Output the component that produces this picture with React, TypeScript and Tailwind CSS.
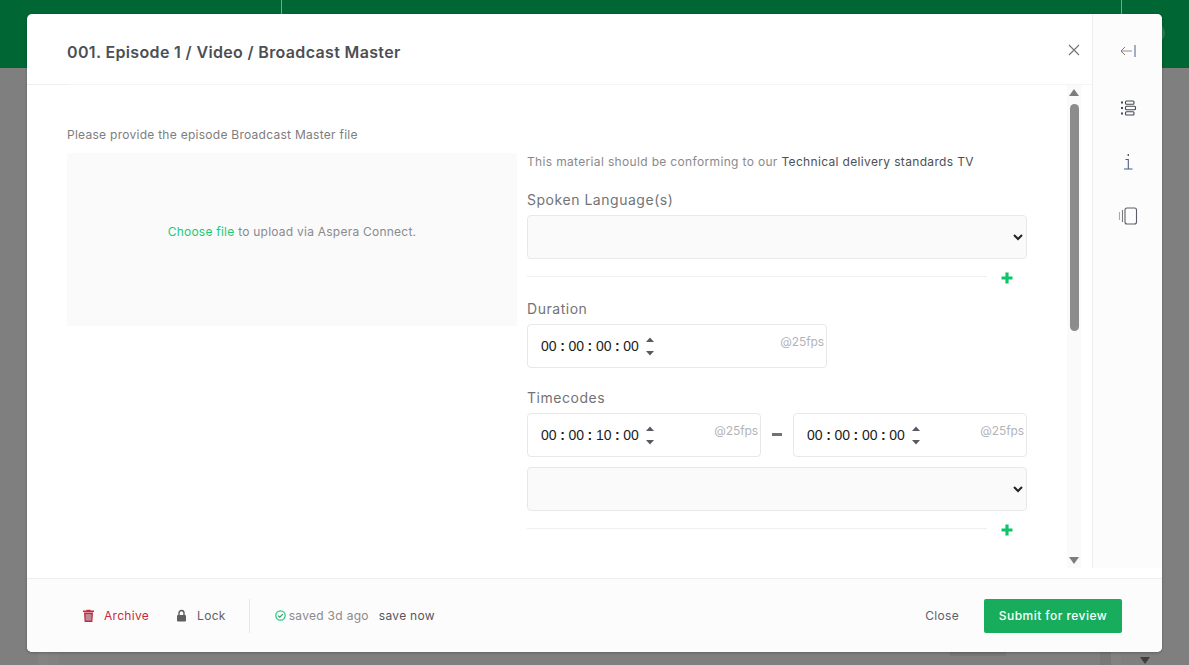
import React from "react";

const FONT = "font-['Inter','Liberation_Sans',sans-serif]";

function Spinner() {
  return (
    <svg width="10" height="20" viewBox="0 0 10 20" className="ml-[6px] shrink-0">
      <path d="M5 1.5 L9 6 L1 6 Z" fill="#565a63" />
      <path d="M1 15 L9 15 L5 19.5 Z" fill="#565a63" />
    </svg>
  );
}

function Time({ value, className }: { value: string; className: string }) {
  return (
    <div className={`relative flex h-[44px] items-center rounded-[4px] border border-[#e8e8e8] bg-white pl-[13px] ${className}`}>
      <span className="mt-[1px] font-['Liberation_Sans',sans-serif] text-[14px] text-[#1c1c1c]">
        {value.split(":").map((p, i) => (
          <React.Fragment key={i}>
            {i > 0 && <span className="mx-[3.6px] font-bold">:</span>}
            {p}
          </React.Fragment>
        ))}
      </span>
      <Spinner />
      <span className="absolute right-[2px] top-[9px] text-[12px] leading-[16px] tracking-[-0.1px] text-[#b4b4b8]">@25fps</span>
    </div>
  );
}

function Sel() {
  return (
    <select className="block h-[44px] w-full rounded-[4px] border border-[#e8e8e8] bg-[#fafafa] px-2 text-[#222]">
      <option value=""></option>
    </select>
  );
}

function Adder() {
  return (
    <div className="flex h-[20px] items-center">
      <div className="h-px w-[460px] bg-[#f0f0f0]" />
      <svg width="12" height="12" viewBox="0 0 12 12" className="ml-[14px] mt-[4px]">
        <path d="M4.4 0.5h3.2v3.9h3.9v3.2H7.6v3.9H4.4V7.6H0.5V4.4h3.9z" fill="#0fc468" />
      </svg>
    </div>
  );
}

export default function App() {
  return (
    <div className={`relative h-[665px] w-full overflow-hidden bg-[#7f7f7f] ${FONT}`}>
      <div className="relative h-[68px] bg-[#006633]">
        <div className="absolute left-[281px] top-0 h-[68px] w-px bg-[#7f9f8f]" />
        <div className="absolute left-[1121px] top-0 h-[68px] w-px bg-[#7f9f8f]" />
        <div className="absolute left-[1145px] top-[23px] h-[20px] w-[20px] rounded-full bg-[#2a7a50]" />
      </div>
      <div className="absolute left-[38px] top-[652px] h-[13px] w-[10px] bg-[#848484]" />
      <div className="absolute left-[48px] top-[652px] h-[13px] w-[11px] bg-[#828282]" />
      <div className="absolute left-[950px] top-[652px] h-[4px] w-[56px] bg-[#777777]" />
      <div className="absolute left-[1100px] top-[652px] h-[13px] w-[11px] bg-[#787878]" />
      <div className="absolute left-[1111px] top-[652px] h-[13px] w-[10px] bg-[#828282]" />
      <svg width="12" height="8" viewBox="0 0 12 8" className="absolute left-[1139px] top-[657px]">
        <path d="M1 0h10L6 7z" fill="#3f3f3f" />
      </svg>

      <div className="absolute left-[27px] top-[14px] flex h-[638px] w-[1135px] flex-col overflow-hidden rounded-[5px] bg-white shadow-[0_1px_3px_rgba(0,0,0,0.25)]">
        <div className="flex h-[554px] shrink-0">
          <div className="flex w-[1065px] shrink-0 flex-col">
            <div className="relative flex h-[71px] shrink-0 items-center justify-between border-b border-[#f5f5f5] pl-[40px] pr-[10px]">
              <h1 className="mt-[6px] text-[16px] font-semibold tracking-[0.35px] text-[#4c4f55]">
                001. Episode 1 / Video / Broadcast Master
              </h1>
              <svg width="14" height="14" viewBox="0 0 14 14" className="mt-[1px] mr-[1px]">
                <path d="M2 2l10 10M12 2L2 12" stroke="#6f7277" strokeWidth="1.1" fill="none" />
              </svg>
              <div className="absolute -bottom-px left-0 h-px w-[39px] bg-[#eeeeee]" />
            </div>
            <div className="flex min-h-0 flex-1">
              <div className="flex min-w-0 flex-1 gap-[10px] pl-[40px] pt-[41px]">
                <div className="w-[450px] shrink-0">
                  <p className="mt-[1px] text-[12px] leading-[16px] tracking-[0.27px] text-[#7d7d80]">Please provide the episode Broadcast Master file</p>
                  <div className="mt-[10px] flex h-[173px] items-start justify-center bg-[#fafafa] pt-[71px] text-[12px] leading-[16px] tracking-[0.24px] text-[#8a8a8d]">
                    <span><span className="text-[#16cc77]">Choose file</span> to upload via Aspera Connect.</span>
                  </div>
                </div>
                <div className="w-[500px] shrink-0 pt-[27px]">
                  <p className="mt-[1px] text-[12px] leading-[16px] tracking-[0.34px] text-[#8a8a8d]">
                    This material should be conforming to our <span className="text-[#4c4f55]">Technical delivery standards TV</span>
                  </p>
                  <label className="mt-[20px] block text-[14px] leading-[20px] tracking-[0.53px] text-[#737377]">Spoken Language(s)</label>
                  <div className="mt-[5px]"><Sel /></div>
                  <div className="mt-[7px]"><Adder /></div>
                  <label className="mt-[13px] block text-[14px] leading-[20px] tracking-[0.53px] text-[#737377]">Duration</label>
                  <div className="mt-[5px]"><Time value="00:00:00:00" className="w-[300px]" /></div>
                  <label className="mt-[20px] block text-[14px] leading-[20px] tracking-[0.53px] text-[#737377]">Timecodes</label>
                  <div className="mt-[5px] flex items-center justify-between">
                    <Time value="00:00:10:00" className="w-[234px]" />
                    <div className="mb-[2px] h-[3px] w-[10px] bg-[#6f7277]" />
                    <Time value="00:00:00:00" className="w-[234px]" />
                  </div>
                  <div className="mt-[10px]"><Sel /></div>
                  <div className="mt-[7px]"><Adder /></div>
                </div>
              </div>
              <div className="mr-[11px] flex w-[14px] shrink-0 flex-col items-center bg-[#fafafa] pt-[4px]">
                <svg width="10" height="7" viewBox="0 0 10 7"><path d="M5 0l5 7H0z" fill="#7d7d7d" /></svg>
                <div className="mt-[8px] h-[227px] w-[9px] rounded-full bg-[#8c8c8c]" />
                <div className="flex-1" />
                <svg width="10" height="7" viewBox="0 0 10 7" className="mb-[4px]"><path d="M0 0h10L5 7z" fill="#7d7d7d" /></svg>
              </div>
            </div>
          </div>
          <div className="flex w-[70px] shrink-0 flex-col items-center border-l border-[#ececec] bg-[#fcfcfc] pt-[30px] text-[#50535a]">
            <svg width="18" height="14" viewBox="0 0 18 14" fill="none" strokeWidth="1">
              <path d="M16 1v12" stroke="#4d5b8c" />
              <path d="M13 7H2" stroke="#b4b6ba" strokeWidth="1.4" />
              <path d="M6 3L2 7l4 4" stroke="#85786c" />
            </svg>
            <svg width="18" height="20" viewBox="0 0 18 20" fill="none" stroke="#44474e" strokeWidth="1.1" className="mt-[40px]">
              <path d="M2 4.5h2M2 10h2M2 15.5h2" strokeWidth="1.8" stroke="#3d4a5e" />
              <rect x="6.5" y="3" width="8.5" height="3.2" rx="1" />
              <rect x="6.5" y="8.3" width="10" height="3.4" rx="1" />
              <rect x="6.5" y="13.8" width="8.5" height="3.2" rx="1" />
            </svg>
            <svg width="10" height="18" viewBox="0 0 10 18" fill="none" stroke="#4a5d80" strokeWidth="1.1" className="mt-[35px]">
              <path d="M5.3 1v2" strokeWidth="1.4" />
              <path d="M2.5 6.5H5.3V15.5M1 16h8.5" />
            </svg>
            <svg width="20" height="18" viewBox="0 0 20 18" fill="none" stroke="#5b5e65" strokeWidth="1.1" className="mt-[36px]">
              <path d="M1.5 5v8" stroke="#b8a978" />
              <path d="M4.5 3v12" stroke="#777a80" />
              <rect x="7" y="1" width="11.5" height="16" rx="2" />
            </svg>
          </div>
        </div>
        <div className="h-[10px] shrink-0 bg-white" />
        <div className="flex h-[74px] shrink-0 items-center justify-between border-t border-[#eeeeee] bg-[#fcfcfc] pl-[56px] pr-[40px] text-[12px] tracking-[0.3px]">
          <div className="flex items-center">
            <svg width="11" height="13" viewBox="0 0 11 13" className="mr-[10px]">
              <path d="M3.5 1.5V.8h4v.7H11v1.4H0V1.5zM1 3.5h9l-.6 9.5H1.6z" fill="#c9283a" />
              <rect x="2.6" y="5" width="5.8" height="6.6" fill="#b98a9a" />
            </svg>
            <span className="text-[#c9283a]">Archive</span>
            <svg width="11" height="13" viewBox="0 0 11 13" fill="none" className="ml-[27px] mr-[10px]">
              <path d="M3 6V4a2.5 2.5 0 015 0v2" stroke="#5a5a5a" strokeWidth="1.4" />
              <rect x="1" y="6" width="9" height="6.5" rx="1" fill="#5f5f5f" />
            </svg>
            <span className="text-[#5f6067]">Lock</span>
            <div className="ml-[23px] mr-[25px] h-[34px] w-px bg-[#e6e6e6]" />
            <svg width="11" height="11" viewBox="0 0 11 11" fill="none" className="mr-[3px]">
              <circle cx="5.5" cy="5.5" r="4.7" stroke="#22cc7f" strokeWidth="1.2" />
              <path d="M3.2 5.6l1.6 1.6 3-3" stroke="#22a06b" strokeWidth="1.2" />
            </svg>
            <span className="text-[#8a8a8d]">saved 3d ago</span>
            <span className="ml-[10px] text-[#54565d]">save now</span>
          </div>
          <div className="flex items-center">
            <span className="text-[#5f6067]">Close</span>
            <button className="ml-[25px] h-[34px] w-[138px] rounded-[2px] bg-[#17ad5c] text-[12px] font-medium tracking-[0.45px] text-white">Submit for review</button>
          </div>
        </div>
      </div>
    </div>
  );
}
